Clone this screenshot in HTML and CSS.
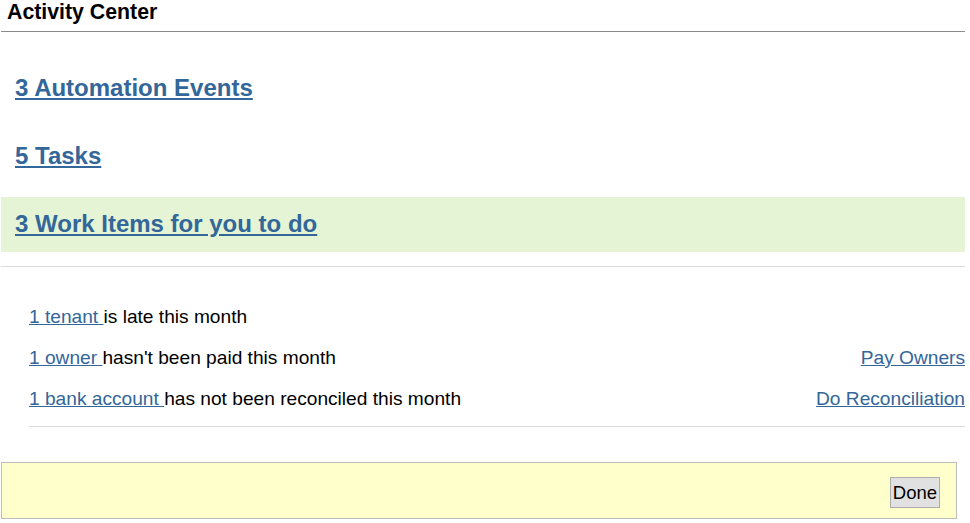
FILE: index.html
```html
<!DOCTYPE html>
<html>
<head>
<meta charset="utf-8">
<link rel="stylesheet" href="styles.css">
</head>
<body>
<div class="page">
  <div class="title">Activity Center</div>
  <div class="sections">
    <div class="section"><a href="#">3 Automation Events</a></div>
    <div class="section"><a href="#">5 Tasks</a></div>
    <div class="section active"><a href="#">3 Work Items for you to do</a></div>
  </div>
  <div class="items">
    <div class="row"><span><a href="#">1 tenant </a>is late this month</span></div>
    <div class="row"><span><a href="#">1 owner </a>hasn't been paid this month</span><a href="#">Pay Owners</a></div>
    <div class="row"><span><a href="#">1 bank account </a>has not been reconciled this month</span><a href="#">Do Reconciliation</a></div>
  </div>
  <div class="footer">
    <button class="done">Done</button>
  </div>
</div>
</body>
</html>
```
FILE: styles.css
```css
html, body {
  margin: 0;
  padding: 0;
  background: #ffffff;
}
body {
  font-family: Arial, "Liberation Sans", sans-serif;
  color: #000;
}
a {
  color: #336699;
  text-decoration: underline;
}
.page {
  margin-left: 1px;
  width: 964px;
}
.title {
  font-size: 21.3px;
  font-weight: bold;
  line-height: 25px;
  padding-left: 6px;
  border-bottom: 1px solid #8a8a8a;
  box-sizing: border-box;
  height: 32px;
}
.sections {
  display: flex;
  flex-direction: column;
  gap: 13px;
  margin-top: 29px;
}
.section {
  font-size: 24px;
  font-weight: bold;
  line-height: 28px;
  padding: 13px 14px 14px;
}
.section.active {
  background: #e4f4d4;
}
.items {
  border-top: 1px solid #dcdcdc;
  margin-top: 14px;
  padding-top: 29px;
}
.row {
  display: flex;
  justify-content: space-between;
  align-items: center;
  height: 41px;
  margin-left: 28px;
  font-size: 19.15px;
}
.items::after {
  content: "";
  display: block;
  margin-left: 28px;
  margin-top: 7px;
  border-top: 1px solid #dcdcdc;
}
.footer {
  margin-top: 35px;
  width: 956px;
  height: 57px;
  box-sizing: border-box;
  background: #ffffcc;
  border: 1px solid #bdbdbd;
  display: flex;
  justify-content: flex-end;
  align-items: flex-start;
  padding: 14px 16px 0 0;
}
.done {
  font-family: Arial, "Liberation Sans", sans-serif;
  font-size: 18.5px;
  height: 31px;
  padding: 0 2px;
  background: #e1e1e1;
  border: 1px solid #adadad;
  color: #000;
  border-radius: 0;
}
```
